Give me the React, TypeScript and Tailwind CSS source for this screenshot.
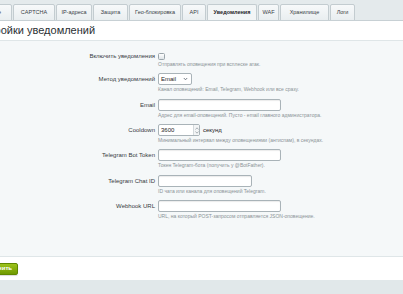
import React from "react"

const tabs = [
  { label: "Общие", w: "w-[40px]" },
  { label: "CAPTCHA", w: "w-[42px]" },
  { label: "IP-адреса", w: "w-[36px]" },
  { label: "Защита", w: "w-[35px]" },
  { label: "Гео-блокировка", w: "w-[52px]" },
  { label: "API", w: "w-[24px]" },
  { label: "Уведомления", w: "w-[50px]", active: true },
  { label: "WAF", w: "w-[21px]" },
  { label: "Хранилище", w: "w-[49px]" },
  { label: "Логи", w: "w-[25px]" },
]

function Row({
  label,
  hint,
  h,
  children,
}: {
  label: string
  hint: string
  h: string
  children: React.ReactNode
}) {
  return (
    <div className={`flex ${h}`}>
      <div className="w-[156px] h-[12px] flex items-center justify-end text-[6px] text-[#353b3f] pr-[1px]">
        {label}
      </div>
      <div className="ml-[2px] flex flex-col">
        <div className="h-[12px] flex items-center">{children}</div>
        <div className="mt-[1px] text-[5px] leading-[6px] text-[#8b9397] whitespace-nowrap">{hint}</div>
      </div>
    </div>
  )
}

function TextInput({ w }: { w: string }) {
  return (
    <div className={`${w} h-[12px] bg-white border border-[#a9b3b8] rounded-[2px] shadow-[inset_0_1px_1px_rgba(0,0,0,0.08)]`} />
  )
}

export default function App() {
  return (
    <div className="w-[403px] h-[294px] overflow-hidden bg-white flex flex-col font-['Liberation_Sans',Arial,sans-serif]">
      {/* tabs */}
      <div className="h-[21px] shrink-0 bg-[#e4eaec] border-b border-[#c7d0d4] flex items-end overflow-hidden">
        <div className="flex gap-[1px] -ml-[28px] -mb-[1px]">
          {tabs.map((t) => (
            <div
              key={t.label}
              className={`${t.w} shrink-0 h-[17px] flex items-center justify-center whitespace-nowrap text-[5.5px] rounded-t-[2px] border border-[#c3ccd0] ${
                t.active
                  ? "bg-[#f2f5f6] font-bold text-[#1f2427] border-b-[#f2f5f6]"
                  : "bg-gradient-to-b from-[#f7f9fa] to-[#e9eef0] text-[#3a4146]"
              }`}
            >
              {t.label}
            </div>
          ))}
        </div>
      </div>

      {/* title */}
      <div className="h-[19px] shrink-0 flex items-center">
        <div className="-ml-[30px] text-[11px] text-[#2a2f33] whitespace-nowrap">Настройки уведомлений</div>
      </div>

      {/* form */}
      <div className="h-[217px] shrink-0 bg-[#f5f8f9] border-y border-[#dfe6e8] pt-[11px]">
        <div className="flex h-[21px]">
          <div className="w-[156px] h-[8px] flex items-center justify-end text-[6px] text-[#353b3f] pr-[1px]">
            Включить уведомления
          </div>
          <div className="ml-[2px] flex flex-col">
            <div className="h-[8px] flex items-center">
              <div className="w-[7px] h-[7px] rounded-[1.5px] border border-[#9aa5ab] bg-gradient-to-b from-[#ffffff] to-[#dfe5e8]" />
            </div>
            <div className="mt-[1px] text-[5px] leading-[6px] text-[#8b9397] whitespace-nowrap">
              Отправлять оповещения при всплеске атак.
            </div>
          </div>
        </div>

        <Row label="Метод уведомлений" hint="Канал оповещений: Email, Telegram, Webhook или все сразу." h="h-[26px]">
          <div className="w-[34px] h-[12px] bg-white border border-[#a9b3b8] rounded-[2px] flex items-center justify-between px-[2px]">
            <span className="text-[6px] text-[#1e2326]">Email</span>
            <svg width="5" height="4" viewBox="0 0 5 4" className="mr-[1px]">
              <path d="M0.8 1 L2.5 2.8 L4.2 1" fill="none" stroke="#55606a" strokeWidth="0.8" />
            </svg>
          </div>
        </Row>

        <Row label="Email" hint="Адрес для email-оповещений. Пусто - email главного администратора." h="h-[25px]">
          <TextInput w="w-[123px]" />
        </Row>

        <Row label="Cooldown" hint="Минимальный интервал между оповещениями (антиспам), в секундах." h="h-[25px]">
          <div className="w-[42px] h-[12px] bg-white border border-[#a9b3b8] rounded-[2px] flex items-center justify-between pl-[2px]">
            <span className="text-[6px] text-[#1e2326]">3600</span>
            <div className="w-[6px] h-full border-l border-[#d3d9dc] bg-[#f3f5f6] flex flex-col items-center justify-center gap-[1px]">
              <svg width="4" height="3" viewBox="0 0 4 3">
                <path d="M0.5 2.5 L2 0.8 L3.5 2.5" fill="none" stroke="#7a858c" strokeWidth="0.6" />
              </svg>
              <svg width="4" height="3" viewBox="0 0 4 3">
                <path d="M0.5 0.5 L2 2.2 L3.5 0.5" fill="none" stroke="#7a858c" strokeWidth="0.6" />
              </svg>
            </div>
          </div>
          <span className="ml-[3px] text-[6px] text-[#1e2326]">секунд</span>
        </Row>

        <Row label="Telegram Bot Token" hint="Токен Telegram-бота (получить у @BotFather)." h="h-[26px]">
          <TextInput w="w-[123px]" />
        </Row>

        <Row label="Telegram Chat ID" hint="ID чата или канала для оповещений Telegram." h="h-[25px]">
          <TextInput w="w-[94px]" />
        </Row>

        <Row label="Webhook URL" hint="URL, на который POST-запросом отправляется JSON-оповещение." h="h-[25px]">
          <TextInput w="w-[123px]" />
        </Row>
      </div>

      {/* buttons */}
      <div className="h-[23px] shrink-0 flex items-center">
        <div className="-ml-[26px] w-[44px] h-[12px] rounded-[2px] bg-gradient-to-b from-[#9cc21a] to-[#6f9a00] border border-[#5f8700] flex items-center justify-center text-[6px] font-bold text-white whitespace-nowrap shadow-[0_1px_1px_rgba(0,0,0,0.15)]">
          Сохранить
        </div>
      </div>

      <div className="flex-1 bg-[#e1e8ea]" />
    </div>
  )
}
